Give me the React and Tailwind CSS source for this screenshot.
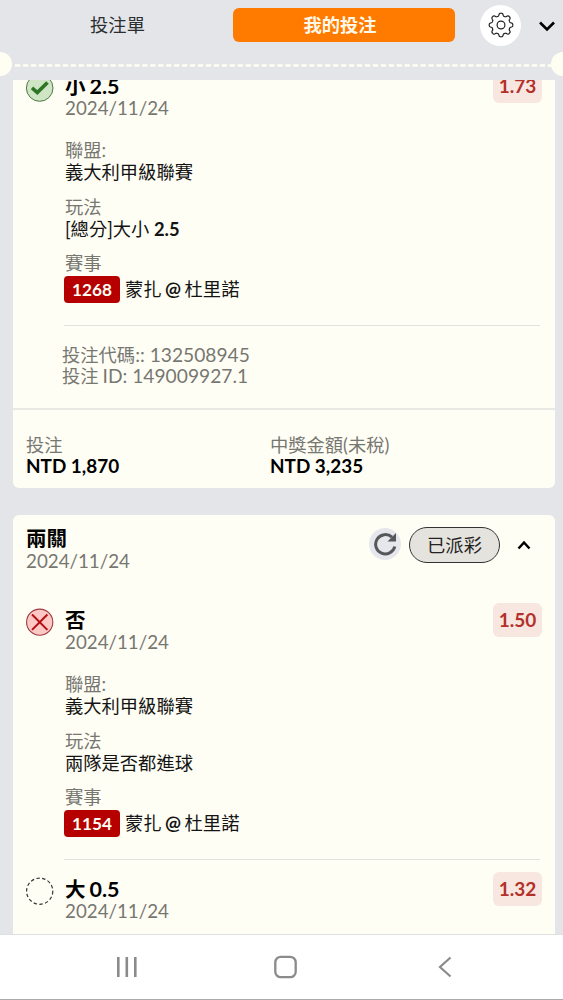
const GEAR_TEETH = 8

function gearPath() {
  const pts = []
  const n = 160
  for (let i = 0; i <= n; i++) {
    const a = (i / n) * Math.PI * 2 - Math.PI / 2
    const r = 10.5 + 1.35 * Math.tanh(1.9 * Math.cos(GEAR_TEETH * a))
    pts.push(`${(13 + r * Math.cos(a)).toFixed(2)} ${(13 + r * Math.sin(a)).toFixed(2)}`)
  }
  return `M${pts.join('L')}Z`
}

function GearIcon() {
  return (
    <svg viewBox="0 0 26 26" className="size-[26px]" fill="none" stroke="#222" strokeWidth="1.2">
      <path d={gearPath()} strokeLinejoin="round" />
      <circle cx="13" cy="13" r="3.9" />
    </svg>
  )
}

function StatusIcon({ status }) {
  return (
    <svg viewBox="0 0 28 28" className="mt-[1px] size-7 shrink-0" fill="none">
      {status === 'won' && (
        <>
          <circle cx="13.7" cy="14" r="13.3" fill="#cfe5c4" stroke="#4c7a45" />
          <path d="M6 13.9l5.3 4.7L21.5 8.4" stroke="#2f7526" strokeWidth="3.6" />
        </>
      )}
      {status === 'lost' && (
        <>
          <circle cx="13.7" cy="14.2" r="13.1" fill="#fbc8c4" stroke="#a03a42" strokeWidth="1.1" />
          <path d="M6 6.5l15.4 15.4M21.4 6.5L6 21.9" stroke="#b50d12" strokeWidth="2" />
        </>
      )}
      {status === 'pending' && (
        <circle cx="13.7" cy="14.2" r="13.1" stroke="#333" strokeWidth="1.2" strokeDasharray="3.4 2.4" />
      )}
    </svg>
  )
}

function Field({ label, children }) {
  return (
    <div className="mb-[11.5px]">
      <div className="h-[22px] leading-[22px] text-[#777772]">{label}</div>
      <div className="h-[23px] leading-[23px] text-[#141414]">{children}</div>
    </div>
  )
}

function Leg({ leg }) {
  return (
    <div className="flex h-[252px] px-[13px]">
      <StatusIcon status={leg.status} />
      <div className="ml-[11px] min-w-0 flex-1">
        <div className="flex h-[66px] justify-between">
          <div>
            <div className="h-[26px] text-[20.5px] font-bold leading-[26px] text-black">
              {leg.pick}
              {leg.line && <span className="ml-[4px] text-[21.5px]">{leg.line}</span>}
            </div>
            <div className="h-[18px] text-[18.75px] leading-[18px] text-[#777772]">{leg.date}</div>
          </div>
          <div className="-mt-[4px] h-[34px] w-[49px] rounded-md bg-[#f8e7e0] text-center text-[19px] font-bold leading-[34px] text-[#b3302b]">
            {leg.odds}
          </div>
        </div>
        {leg.home && (
          <>
            <Field label="聯盟:">{leg.league}</Field>
            <Field label="玩法">{leg.market}</Field>
            <div className="h-[24px] leading-[22px] text-[#777772]">賽事</div>
            <div className="flex h-[27px] items-center text-[#141414]">
              <span className="-ml-px mr-[6px] h-[27px] w-[56px] rounded-[4px] bg-[#b60000] text-center text-[17.2px] font-bold leading-[27px] text-[#fffef5]">
                {leg.code}
              </span>
              <span className="-ml-px">{leg.home}</span>
              <span className="mx-[3.5px] text-[19px] font-bold">@</span>
              <span>{leg.away}</span>
            </div>
          </>
        )}
      </div>
    </div>
  )
}

function Divider() {
  return <div className="ml-[51px] mr-[15px] h-px bg-[#e3e2de]" />
}

function Amount({ label, value }) {
  return (
    <div className="w-[244px]">
      <div className="h-[22px] leading-[22px] text-[#777772]">{label}</div>
      <div className="h-[19px] text-[18.9px] font-bold leading-[19px] text-black">{value}</div>
    </div>
  )
}

const legs = [
  {
    status: 'won',
    pick: '小',
    line: '2.5',
    date: '2024/11/24',
    odds: '1.73',
    league: '義大利甲級聯賽',
    market: <>[總分]大小 <b>2.5</b></>,
    code: '1268',
    home: '蒙扎',
    away: '杜里諾',
  },
  {
    status: 'lost',
    pick: '否',
    date: '2024/11/24',
    odds: '1.50',
    league: '義大利甲級聯賽',
    market: '兩隊是否都進球',
    code: '1154',
    home: '蒙扎',
    away: '杜里諾',
  },
  { status: 'pending', pick: '大', line: '0.5', date: '2024/11/24', odds: '1.32' },
]

export default function App() {
  return (
    <div className="flex h-[1000px] w-[563px] flex-col overflow-hidden whitespace-nowrap bg-[#e3e5e8] font-['Lato','Noto_Sans_CJK_TC',sans-serif] text-[18.3px]">
      <header className="relative h-20 shrink-0">
        <div className="flex h-[50px] items-center">
          <div className="w-[233px] pl-[2px] pt-[2px] text-center text-[#2b2d30]">投注單</div>
          <div className="h-[34px] w-[222px] rounded-md bg-[#ff7b00] pr-[8px] text-center font-bold leading-[34px] text-[#fff8e8]">
            我的投注
          </div>
          <div className="ml-[25px] flex size-[41px] items-center justify-center rounded-full bg-white">
            <GearIcon />
          </div>
          <svg viewBox="0 0 18 12" className="ml-[17px] mt-[2px] h-3 w-[18px]" fill="none" stroke="#000" strokeWidth="2.6">
            <path d="M2 2.5l7 7 7-7" />
          </svg>
        </div>
        <svg className="mt-[14px] block h-[3px] w-[563px]">
          <path d="M15 1.5H553" stroke="#fffef3" strokeWidth="2.6" strokeDasharray="5.4 2.55" />
        </svg>
        <div className="absolute -left-[12px] top-[52px] size-6 rounded-full bg-[#fffef3]" />
        <div className="absolute -right-[12px] top-[52px] size-6 rounded-full bg-[#fffef3]" />
      </header>

      <main className="min-h-0 flex-1 overflow-hidden pl-[13px] pr-[8px]">
        <section className="-mt-[7px] h-[414.5px] rounded-b-md bg-[#fffef5]">
          <Leg leg={legs[0]} />
          <Divider />
          <div className="ml-[49px] h-[82px] pt-[19px] leading-[20.5px] text-[#777772]">
            <div className="h-[20.5px]">投注代碼<span className="text-[19.2px]">:: 132508945</span></div>
            <div className="h-[20.5px]">投注<span className="ml-[4px] text-[19.2px]">ID: 149009927.1</span></div>
          </div>
          <div className="flex border-t-2 border-[#e9e9e4] pl-[13px] pt-[24px]">
            <Amount label="投注" value="NTD 1,870" />
            <Amount label="中獎金額(未稅)" value="NTD 3,235" />
          </div>
        </section>

        <section className="mt-[27.5px] h-[600px] rounded-t-md bg-[#fffef5]">
          <div className="flex h-[92px] pl-[13px] pt-[10px]">
            <div className="w-[343px]">
              <div className="h-[26px] text-[20.5px] font-bold leading-[26px]">兩關</div>
              <div className="h-[18px] text-[18.75px] leading-[19px] text-[#777772]">2024/11/24</div>
            </div>
            <div className="mt-[3px] flex size-8 items-center justify-center rounded-full bg-[#e6e7ec]">
              <svg viewBox="0 0 24 24" className="size-6" fill="none" stroke="#55575a" strokeWidth="3">
                <path d="M21.8 14.5A9.7 9.7 0 1 1 19 5.2" />
                <path d="M23 1v8.5h-8.5z" fill="#55575a" stroke="none" />
              </svg>
            </div>
            <div className="ml-[8px] mt-[2px] h-9 w-[91px] rounded-full border border-[#333] bg-[#e5e3de] text-center leading-[34px] text-[#222]">
              已派彩
            </div>
            <svg viewBox="0 0 14 10" className="ml-[17px] mt-[15px] h-[10px] w-[14px]" fill="none" stroke="#000" strokeWidth="2.5">
              <path d="M1.5 8.5L7 2.5l5.5 6" />
            </svg>
          </div>
          <Leg leg={legs[1]} />
          <Divider />
          <div className="h-4" />
          <Leg leg={legs[2]} />
        </section>
      </main>

      <nav className="flex h-[66px] shrink-0 items-start border-b border-t border-b-[#aaa] border-t-[#dedfe0] bg-white pt-[20px] text-[#8b8b8b]">
        <svg viewBox="0 0 22 22" className="ml-[116px] mt-[1px] size-[22px]" stroke="currentColor" strokeWidth="2.6">
          <path d="M2.3 1v20M10.8 1v20M19.3 1v20" />
        </svg>
        <svg viewBox="0 0 24 24" className="ml-[136px] size-6" fill="none" stroke="currentColor" strokeWidth="2.3">
          <rect x="1.3" y="1.8" width="20.4" height="20.4" rx="5.5" />
        </svg>
        <svg viewBox="0 0 14 22" className="ml-[140px] mt-[1px] h-[22px] w-[14px]" fill="none" stroke="currentColor" strokeWidth="2.2">
          <path d="M12.5 1.5L2 11l10.5 9.5" />
        </svg>
      </nav>
    </div>
  )
}
